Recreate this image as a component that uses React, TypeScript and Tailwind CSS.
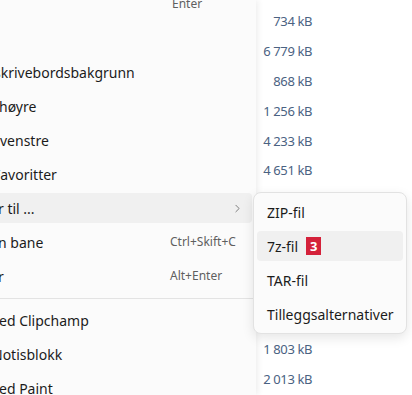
import { ChevronRight } from 'lucide-react'

const font = { fontFamily: '"Noto Sans", "Open Sans", sans-serif' }

interface MenuRow {
  label: string
  shift?: string
  shortcut?: string
  sub?: boolean
  active?: boolean
}

const topRows: MenuRow[] = [
  { label: '', shortcut: 'Enter' },
  { label: '' },
  { label: 'skrivebordsbakgrunn', shift: '-ml-[6px]' },
  { label: 'høyre', shift: '-ml-[1px]' },
  { label: 'venstre' },
  { label: 'Favoritter', shift: '-ml-[7px]' },
  { label: 'r til ...', shift: '-ml-[2px]', sub: true, active: true },
  { label: 'n bane', shift: '-ml-[2px]', shortcut: 'Ctrl+Skift+C' },
  { label: 'r', shift: '-ml-[2px]', shortcut: 'Alt+Enter' },
]

const bottomRows: MenuRow[] = [
  { label: 'ed Clipchamp', shift: '-ml-[1px]' },
  { label: 'Notisblokk', shift: '-ml-[8px]' },
  { label: 'ed Paint', shift: '-ml-[1px]' },
]

// rows behind the submenu are left empty
const sizes = [
  '734 kB',
  '6 779 kB',
  '868 kB',
  '1 256 kB',
  '4 233 kB',
  '4 651 kB',
  '',
  '',
  '',
  '',
  '',
  '1 803 kB',
  '2 013 kB',
]

const subItems = ['ZIP-fil', '7z-fil', 'TAR-fil', 'Tilleggsalternativer']

function Row({ row }: { row: MenuRow }) {
  return (
    <div className="h-[34px] flex items-center py-[2px] pr-[4px]">
      <div
        className={`h-full w-full flex items-center rounded-r-[4px] ${row.active ? 'bg-[#f0f0f0]' : ''}`}
      >
        <span className={`w-[172px] shrink-0 whitespace-nowrap text-[14px] text-[#1b1b1b] ${row.shift ?? ''}`}>
          {row.label}
        </span>
        {row.shortcut && (
          <span className="text-[12px] text-[#5f5f5f] whitespace-nowrap">{row.shortcut}</span>
        )}
        {row.sub && (
          <ChevronRight size={13} strokeWidth={1.4} className="ml-auto mr-[8px] text-[#5a5a5a]" />
        )}
      </div>
    </div>
  )
}

export default function App() {
  return (
    <div className="relative w-[412px] h-[395px] overflow-hidden bg-white flex" style={font}>
      <div className="w-[256px] shrink-0 bg-[#fbfbfb] overflow-hidden z-10 shadow-[2px_0_6px_rgba(0,0,0,0.07)]">
        <div className="-mt-[13px] flex flex-col">
          {topRows.map((r, i) => (
            <Row key={i} row={r} />
          ))}
          <div className="h-[10px] flex items-center pr-[2px]">
            <div className="h-px w-full bg-[#e3e3e3]" />
          </div>
          {bottomRows.map((r, i) => (
            <Row key={i} row={r} />
          ))}
        </div>
      </div>

      <div className="flex-1 flex flex-col pt-[7px]">
        {sizes.map((s, i) => (
          <div key={i} className="h-[30px] w-[56px] flex items-center justify-end text-[13px] text-[#4a6282] whitespace-nowrap tracking-[-0.4px]">
            {s}
          </div>
        ))}
      </div>

      <div className="absolute left-[253px] top-[192px] w-[154px] z-20 rounded-[8px] border border-[#e2e2e2] bg-[#fbfbfb] shadow-[0_4px_12px_rgba(0,0,0,0.1)] px-[3px] py-[2px]">
        {subItems.map((t, i) => (
          <div key={t} className="h-[34px] py-[2px]">
            <div className={`h-full flex items-center gap-[8px] px-[10px] rounded-[4px] ${i === 1 ? 'bg-[#f0f0f0]' : ''}`}>
              <span className="text-[14px] text-[#1b1b1b] whitespace-nowrap">{t}</span>
              {i === 1 && (
                <span className="h-[18px] w-[15px] flex items-center justify-center bg-[#d4213a] text-white text-[13px] font-bold leading-none">
                  3
                </span>
              )}
            </div>
          </div>
        ))}
      </div>
    </div>
  )
}
